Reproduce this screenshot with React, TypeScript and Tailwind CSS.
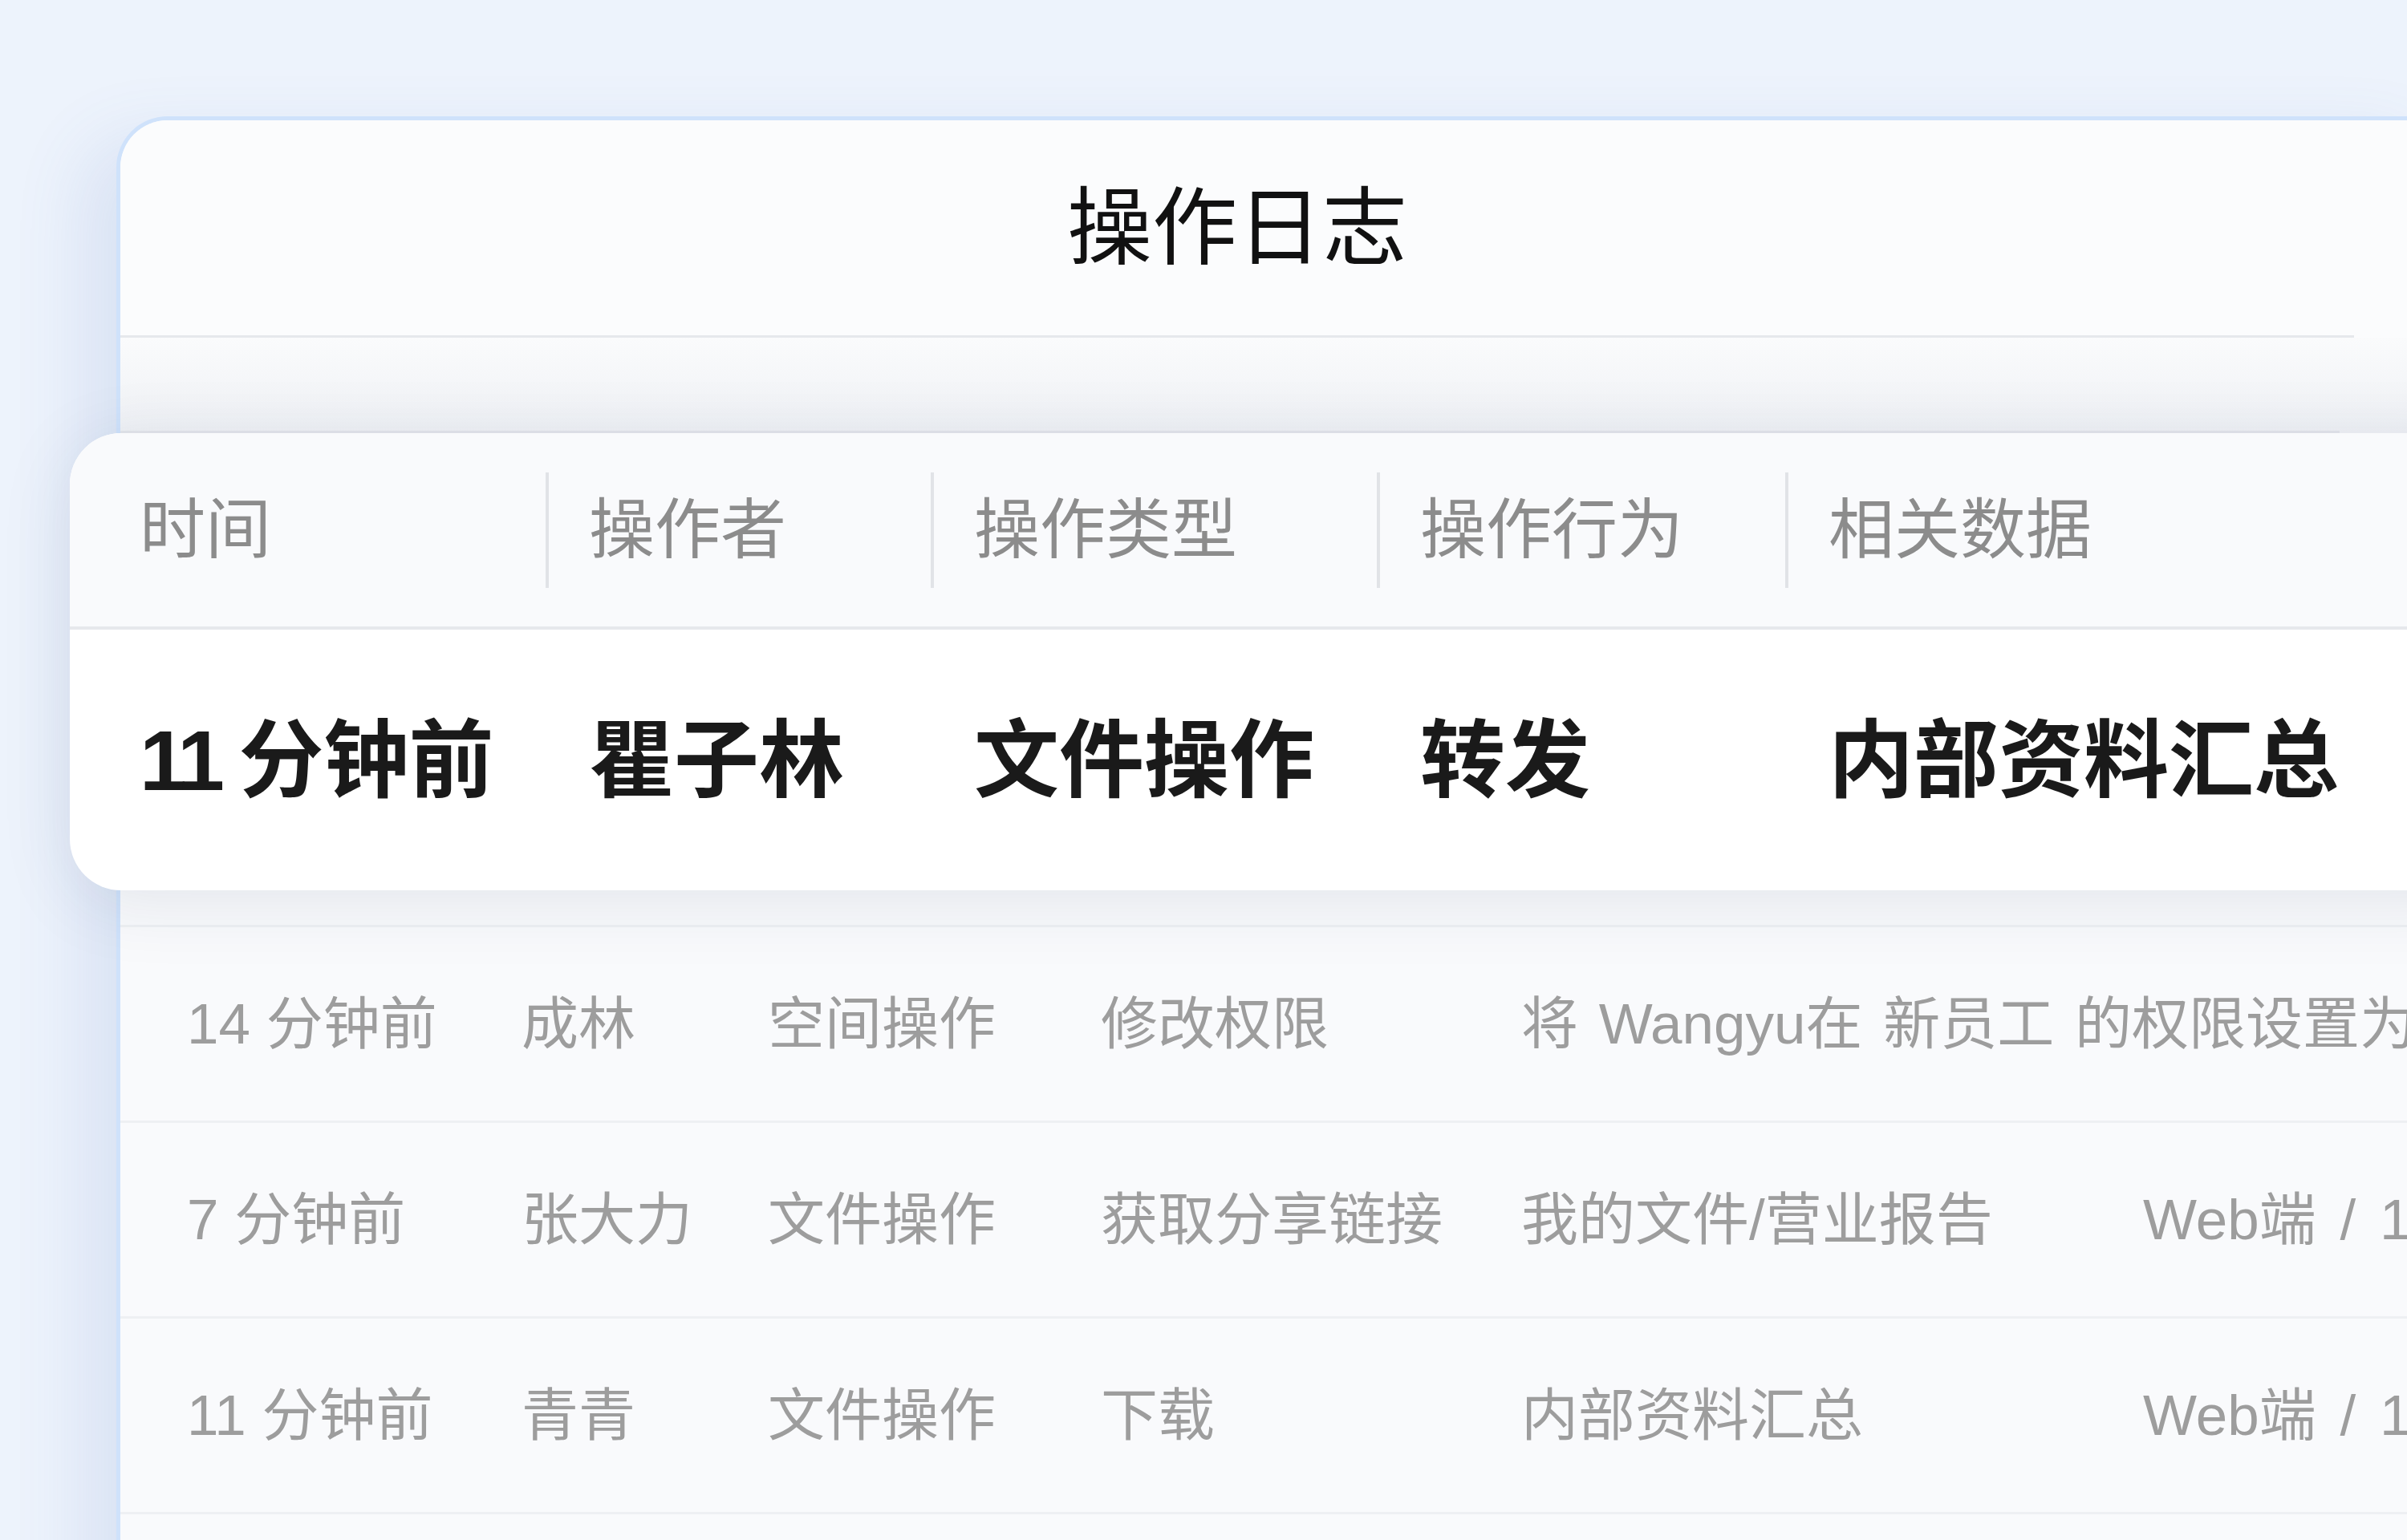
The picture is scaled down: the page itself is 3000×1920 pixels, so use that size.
import React from 'react'

const headers = ['时间', '操作者', '操作类型', '操作行为', '相关数据']
const focused = ['分钟前', '瞿子林', '文件操作', '转发', '内部资料汇总']

const rows = [
  ['14 分钟前', '成林', '空间操作', '修改权限', '将 Wangyu在 新员工 的权限设置为 可编辑', ''],
  ['7 分钟前', '张大力', '文件操作', '获取分享链接', '我的文件/营业报告', 'Web端 / 192.168.1.24'],
  ['11 分钟前', '青青', '文件操作', '下载', '内部资料汇总', 'Web端 / 192.168.1.36'],
  ['16 分钟前', '王宇', '空间操作', '新建空间', '新员工', 'Web端 / 192.168.1.18'],
]

export default function App() {
  return (
    <div className="relative w-[3000px] h-[1920px] overflow-hidden bg-[#edf3fc] font-['Liberation_Sans','Noto_Sans_CJK_SC',sans-serif]">
      {/* 背景卡片 */}
      <div className="ml-[145px] mt-[145px] w-[2900px] h-[1900px] rounded-tl-[64px] border-l-[5px] border-t-[5px] border-[#cfe2fb] bg-[#f9fafc] shadow-[-40px_30px_90px_rgba(70,110,180,0.12)]">
        {/* 标题 */}
        <div className="h-[271px] flex flex-col bg-[#fbfcfd] rounded-tl-[59px]">
          <div className="w-[2784px] flex-1 flex items-center justify-center">
            <h1 className="text-[106px] leading-none font-normal text-[#111111]">操作日志</h1>
          </div>
          <div className="w-[2784px] h-[3px] bg-[#e6e8ec]" />
        </div>

        {/* 表头（被浮层遮住） */}
        <div className="h-[119px] flex flex-col bg-linear-to-b from-[#fafbfc] to-[#eff1f5]">
          <div className="flex-1" />
          <div className="w-[2766px] h-[3px] bg-[#e4e6eb]" />
        </div>
        <div className="h-[616px] border-b-[3px] border-[#eef0f3]" />

        {/* 日志行 */}
        {rows.map((row, ri) => (
          <div
            key={ri}
            className="h-[244px] border-b-[3px] border-[#eef0f3] grid grid-cols-[500px_307px_415px_524px_775px_1fr] items-center text-[71px] leading-none text-[#9d9d9d]"
          >
            {row.map((cell, ci) => (
              <div
                key={ci}
                className={
                  ci === 0
                    ? 'pl-[83px] whitespace-nowrap'
                    : ci === 5
                      ? 'whitespace-nowrap [word-spacing:10px]'
                      : ci === 4
                        ? 'whitespace-nowrap [word-spacing:6px]'
                        : 'whitespace-nowrap'
                }
              >
                {cell}
              </div>
            ))}
          </div>
        ))}
      </div>

      {/* 放大的当前行 */}
      <div className="absolute left-[87px] top-[540px] w-[3000px] rounded-l-[64px] bg-white overflow-hidden shadow-[0_14px_90px_rgba(30,50,90,0.10)]">
        <div className="h-[245px] grid grid-cols-[593px_480px_556px_509px_1fr] items-center border-b-4 border-[#e6e8ec] bg-[#f9fafc] text-[82px] leading-none text-[#8c8c8c]">
          {headers.map((label, i) => (
            <div key={label} className="flex items-center">
              {i > 0 && <div className="h-[144px] w-[4px] bg-[#e1e3e7]" />}
              <span className={i === 0 ? 'pl-[87px] whitespace-nowrap' : 'pl-[50px] whitespace-nowrap'}>{label}</span>
            </div>
          ))}
        </div>
        <div className="h-[325px] grid grid-cols-[593px_480px_556px_509px_1fr] items-center text-[106px] leading-none font-bold text-[#1a1a1a]">
          {focused.map((cell, i) => (
            <div key={i} className={i === 0 ? 'pl-[87px] whitespace-nowrap' : 'pl-[54px] whitespace-nowrap'}>
              {i === 0 && <span className="tracking-[-6px]">11 </span>}
              {cell}
            </div>
          ))}
        </div>
      </div>
    </div>
  )
}
